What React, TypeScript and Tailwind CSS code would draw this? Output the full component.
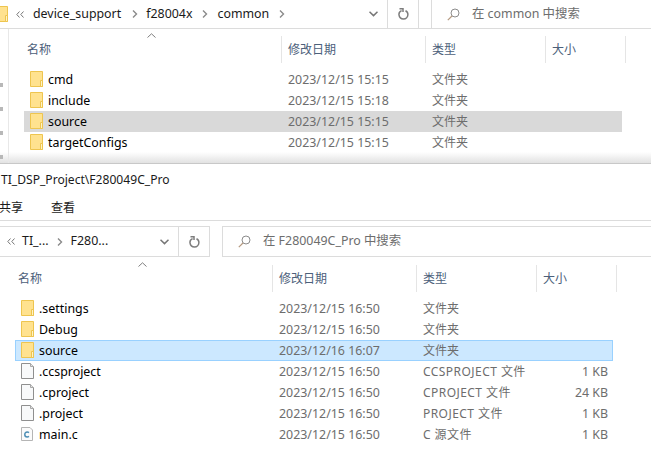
import React from 'react';

interface Row {
  name: string;
  date: string;
  type: string;
  size?: string;
  icon?: 'folder' | 'file' | 'c';
  selected?: boolean;
}

const topRows: Row[] = [
  { name: 'cmd', date: '2023/12/15 15:15', type: '文件夹' },
  { name: 'include', date: '2023/12/15 15:18', type: '文件夹' },
  { name: 'source', date: '2023/12/15 15:15', type: '文件夹', selected: true },
  { name: 'targetConfigs', date: '2023/12/15 15:15', type: '文件夹' },
];

const bottomRows: Row[] = [
  { name: '.settings', date: '2023/12/15 16:50', type: '文件夹' },
  { name: 'Debug', date: '2023/12/15 16:50', type: '文件夹' },
  { name: 'source', date: '2023/12/16 16:07', type: '文件夹', selected: true },
  { name: '.ccsproject', date: '2023/12/15 16:50', type: 'CCSPROJECT 文件', size: '1 KB', icon: 'file' },
  { name: '.cproject', date: '2023/12/15 16:50', type: 'CPROJECT 文件', size: '24 KB', icon: 'file' },
  { name: '.project', date: '2023/12/15 16:50', type: 'PROJECT 文件', size: '1 KB', icon: 'file' },
  { name: 'main.c', date: '2023/12/15 16:50', type: 'C 源文件', size: '1 KB', icon: 'c' },
];

const FolderIcon = () => (
  <svg width="14" height="16" viewBox="0 0 14 16" className="shrink-0">
    <path d="M0.5 0.5H12.5V15.5H0.5Z" fill="#ffe28f" stroke="#eec54f" />
    <path d="M10.5 15.5V9.5H12.5V15.5Z" fill="#fff3c4" stroke="#eec54f" />
  </svg>
);

const FileIcon = () => (
  <svg width="14" height="16" viewBox="0 0 14 16" className="shrink-0">
    <path d="M0.5 0.5H9.5L12.5 3.5V15.5H0.5Z" fill="#f8f9fa" stroke="#8f8f8f" />
    <path d="M9.5 0.5V3.5H12.5" fill="#e4e4e4" stroke="#a8a8a8" />
  </svg>
);

const CFileIcon = () => (
  <svg width="14" height="16" viewBox="0 0 14 16" className="shrink-0">
    <path d="M0.5 1.5H9L11.5 4V14.5H0.5Z" fill="#fbfbfb" stroke="#b5b5b5" />
    <path d="M8 6.6C7.4 6.1 6.8 6 6.2 6C4.7 6 3.8 7 3.8 8.5C3.8 10 4.7 11 6.2 11C6.9 11 7.4 10.8 8 10.4" fill="none" stroke="#4f8fb5" strokeWidth="1.5" />
  </svg>
);

const Chevron = () => (
  <svg width="6" height="8" viewBox="0 0 6 8" className="shrink-0">
    <path d="M1 0.5L4.5 4L1 7.5" fill="none" stroke="#8a8a8a" strokeWidth="1.4" />
  </svg>
);

const DoubleLeft = () => (
  <svg width="8" height="7" viewBox="0 0 8 7" className="shrink-0">
    <path d="M3.5 0.5L0.8 3.5L3.5 6.5M7.5 0.5L4.8 3.5L7.5 6.5" fill="none" stroke="#777777" />
  </svg>
);

const DropDown = () => (
  <svg width="9" height="6" viewBox="0 0 9 6" className="shrink-0">
    <path d="M0.5 0.8L4.5 4.6L8.5 0.8" fill="none" stroke="#777777" strokeWidth="1.5" />
  </svg>
);

const Refresh = () => (
  <svg width="11" height="12" viewBox="0 0 11 12" className="shrink-0">
    <path d="M3.6 2.6C1.8 3.3 0.8 5 1 6.8C1.3 9.2 3.2 10.9 5.5 10.9C7.9 10.9 9.9 8.9 9.9 6.5C9.9 4.8 9 3.4 7.5 2.7" fill="none" stroke="#7d7d7d" strokeWidth="1.5" />
    <path d="M1.5 0.8H5V4" fill="none" stroke="#7d7d7d" strokeWidth="1.5" />
  </svg>
);

const SearchGlass = () => (
  <svg width="13" height="13" viewBox="0 0 13 13" className="shrink-0">
    <circle cx="8" cy="5" r="4" fill="none" stroke="#8c8c8c" />
    <path d="M5 8L0.8 12.2" fill="none" stroke="#b59a80" strokeWidth="1.2" />
  </svg>
);

const SortCaret = () => (
  <svg width="9" height="5" viewBox="0 0 9 5">
    <path d="M0.5 4.5L4.5 0.8L8.5 4.5" fill="none" stroke="#7f7f7f" />
  </svg>
);

const HeaderCols = ({ caretLeft }: { caretLeft: string }) => (
  <div className="relative grid grid-cols-[258px_144px_120px_80px] h-[27px] text-[12px] text-[#4c607a]">
    <div className="flex items-center pl-[3px] border-r border-[#e5e5e5]">名称</div>
    <div className="flex items-center pl-[6px] border-r border-[#e5e5e5]">修改日期</div>
    <div className="flex items-center pl-[6px] border-r border-[#e5e5e5]">类型</div>
    <div className="flex items-center pl-[6px] border-r border-[#e5e5e5]">大小</div>
    <div className={`absolute top-[-3px] ${caretLeft}`}>
      <SortCaret />
    </div>
  </div>
);

const FileRow = ({ row, active }: { row: Row; active?: boolean }) => {
  const selected = row.selected
    ? active
      ? 'bg-[#cce8ff] outline outline-1 outline-offset-[-1px] outline-[#99d1ff]'
      : 'bg-[#d9d9d9]'
    : '';
  return (
    <div className={`grid grid-cols-[258px_144px_120px_76px] h-[21px] items-center text-[12.4px] ${selected}`}>
      <div className="flex items-center gap-[4px] pl-[6px] text-black">
        {row.icon === 'file' ? <FileIcon /> : row.icon === 'c' ? <CFileIcon /> : <FolderIcon />}
        <span className="pt-[2px]">{row.name}</span>
      </div>
      <div className="pl-[6px] pt-[2px] text-[#6d6d6d]">{row.date}</div>
      <div className={`pl-[6px] text-[12px] text-[#6d6d6d] ${row.size ? 'tracking-[0.45px]' : ''}`}>{row.type}</div>
      <div className="pr-[5px] pt-[2px] text-right text-[#6d6d6d]">{row.size}</div>
    </div>
  );
};

export default function App() {
  return (
    <div className="w-[651px] h-[470px] overflow-hidden bg-white font-['Noto_Sans','Noto_Sans_CJK_SC',sans-serif]">
      {/* first explorer window, cut off at the top */}
      <div className="h-[164px] border-b border-[#c8c8c8]">
        <div className="flex h-[29px] border-b border-[#dcdcdc] text-[12.4px]">
          <div className="flex w-[419px] items-center border-r border-[#dcdcdc]">
            <div className="w-[9px] h-[17px] overflow-hidden flex justify-end">
              <FolderIcon />
            </div>
            <div className="ml-[7px]">
              <DoubleLeft />
            </div>
            <span className="ml-[9px] text-[#1a1a1a]">device_support</span>
            <div className="ml-[11px]"><Chevron /></div>
            <span className="ml-[8px] text-[#1a1a1a]">f28004x</span>
            <div className="ml-[10px]"><Chevron /></div>
            <span className="ml-[9px] text-[#1a1a1a]">common</span>
            <div className="ml-[10px]"><Chevron /></div>
            <div className="ml-auto flex h-full items-center">
              <DropDown />
              <div className="ml-[9px] flex h-full w-[31px] items-center justify-center border-l border-[#dcdcdc]">
                <Refresh />
              </div>
            </div>
          </div>
          <div className="ml-[12px] flex flex-1 items-center border-l border-[#dcdcdc] pl-[15px] text-[#6d6d6d]">
            <SearchGlass />
            <span className="ml-[12px]">在 common 中搜索</span>
          </div>
        </div>
        <div className="flex h-[134px]">
          <div className="flex w-[9px] flex-col gap-[20px] border-r border-[#e8e8e8] pt-[54px]">
            <div className="h-[4px] w-[3px] bg-[#b8b8b8]" />
            <div className="h-[4px] w-[3px] bg-[#b8b8b8]" />
            <div className="h-[4px] w-[3px] bg-[#b8b8b8]" />
            <div className="h-[4px] w-[3px] bg-[#b8b8b8]" />
          </div>
          <div className="flex flex-1 flex-col pl-[15px] pt-[7px]">
            <HeaderCols caretLeft="left-[123px]" />
            <div className="mt-[6px] w-[598px]">
              {topRows.map((row) => (
                <FileRow key={row.name} row={row} />
              ))}
            </div>
          </div>
        </div>
      </div>
      <div className="-mt-[12px] h-[11px] bg-gradient-to-b from-[#ffffff] to-[#e2e2e2]" />
      <div className="h-px" />

      {/* second explorer window */}
      <div>
        <div className="flex h-[32px] items-center pl-px text-[12.1px] text-[#1a1a1a]">TI_DSP_Project\F280049C_Pro</div>
        <div className="flex h-[25px] items-center gap-[28px] border-b border-[#dcdcdc] text-[12px] text-[#1a1a1a]">
          <span className="-ml-px">共享</span>
          <span>查看</span>
        </div>
        <div className="mt-[5px] flex h-[31px] text-[12.4px]">
          <div className="flex w-[210px] items-center border-y border-r border-[#dcdcdc]">
            <div className="ml-[7px]"><DoubleLeft /></div>
            <span className="ml-[7px] text-[#1a1a1a]">TI_...</span>
            <div className="ml-[8px]"><Chevron /></div>
            <span className="ml-[8px] text-[#1a1a1a]">F280...</span>
            <div className="ml-auto flex h-full items-center">
              <DropDown />
              <div className="ml-[9px] flex h-full w-[31px] items-center justify-center border-l border-[#dcdcdc]">
                <Refresh />
              </div>
            </div>
          </div>
          <div className="ml-[12px] flex flex-1 items-center border-y border-l border-[#dcdcdc] pl-[15px] text-[#6d6d6d]">
            <SearchGlass />
            <span className="ml-[12px]">在 F280049C_Pro 中搜索</span>
          </div>
        </div>
        <div className="pl-[15px] pt-[8px]">
          <HeaderCols caretLeft="left-[123px]" />
          <div className="mt-[6px] w-[598px]">
            {bottomRows.map((row) => (
              <FileRow key={row.name} row={row} active />
            ))}
          </div>
        </div>
      </div>
    </div>
  );
}
